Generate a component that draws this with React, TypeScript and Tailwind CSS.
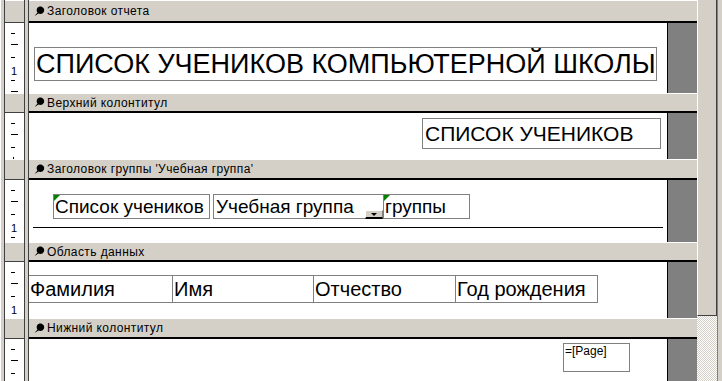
import React from "react";

const ui = { fontFamily: '"Liberation Sans", Arial, sans-serif' };

const Glyph = () => (
  <svg width="11" height="11" viewBox="0 0 11 11" className="shrink-0">
    <path d="M0.5 10 L3.5 6.5 C2 4.5 2.5 1.5 5.5 0.5 C8.5 0 11 2.5 10 5.5 C9 8 6 8.5 4.5 7.5 Z" fill="#000" />
  </svg>
);

const Ruler = ({ full }: { full: boolean }) => (
  <>
    <div className="absolute left-[6px] top-[10px] h-px w-[4px] bg-black" />
    <div className="absolute left-[6px] top-[21px] h-px w-[7px] bg-black" />
    <div className="absolute left-[6px] top-[34px] h-px w-[4px] bg-black" />
    {full ? (
      <>
        <div className="absolute left-[6px] top-[43px] text-[11px] leading-none">1</div>
        <div className="absolute left-[6px] top-[57px] h-px w-[4px] bg-black" />
        <div className="absolute left-[6px] top-[68px] h-px w-[7px] bg-black" />
      </>
    ) : (
      <div className="absolute left-[8px] top-[44px] h-[2px] w-px bg-black" />
    )}
  </>
);

const Gutter = ({ header, full }: { header?: boolean; full?: boolean }) => (
  <div className="flex w-[29px] shrink-0">
    <div className="w-[4px] border-l border-white bg-[#d4d0c8]" />
    <div className="w-px bg-[#404040]" />
    {header ? (
      <div className="w-[19px] border-t border-white border-b border-b-[#404040] bg-[#d4d0c8]" />
    ) : (
      <div className="relative w-[19px] overflow-hidden bg-white">
        <Ruler full={!!full} />
      </div>
    )}
    <div className="w-px bg-[#404040]" />
    <div className="w-[3px] bg-[#d4d0c8]" />
    <div className="w-px bg-[#404040]" />
  </div>
);

const Section = ({
  title,
  headH,
  bodyH,
  full,
  children,
}: {
  title: string;
  headH: string;
  bodyH: string;
  full?: boolean;
  children?: React.ReactNode;
}) => (
  <>
    <div className={`flex ${headH}`}>
      <Gutter header />
      <div className="flex w-[668px] items-center border-t border-white border-b-2 border-b-black bg-[#d4d0c8] pl-[5px]">
        <Glyph />
        <span className="ml-[2px] whitespace-nowrap text-[12px] leading-none tracking-[0.4px]">{title}</span>
      </div>
    </div>
    <div className={`flex ${bodyH}`}>
      <Gutter full={full} />
      <div className="relative w-[638px] overflow-hidden bg-white">{children}</div>
      <div className="w-px bg-black" />
      <div className="w-[29px] bg-[#808080]" />
    </div>
  </>
);

const Corner = () => (
  <div className="absolute left-0 top-0 h-0 w-0 border-t-[6px] border-r-[6px] border-t-[#008000] border-r-transparent" />
);

const Box = ({ className, children }: { className: string; children?: React.ReactNode }) => (
  <div className={`absolute flex items-center whitespace-nowrap border border-[#808080] leading-none ${className}`}>
    {children}
  </div>
);

export default function App() {
  const fields = [
    { label: "Фамилия", w: "w-[144px]" },
    { label: "Имя", w: "w-[141px]" },
    { label: "Отчество", w: "w-[142px]" },
    { label: "Год рождения", w: "w-[142px]" },
  ];
  return (
    <div className="flex h-[381px] w-[722px] overflow-hidden bg-[#d4d0c8] text-black" style={ui}>
      <div className="flex w-[697px] flex-col">
        <Section title="Заголовок отчета" headH="h-[23px]" bodyH="h-[70px]" full>
          <Box className="left-[5px] top-[24px] h-[34px] w-[623px] pl-[1px] text-[27px]">
            СПИСОК УЧЕНИКОВ КОМПЬЮТЕРНОЙ ШКОЛЫ
          </Box>
        </Section>
        <Section title="Верхний колонтитул" headH="h-[20px]" bodyH="h-[46px]">
          <Box className="left-[393px] top-[5px] h-[31px] w-[239px] pl-[2px] text-[21px]">СПИСОК УЧЕНИКОВ</Box>
        </Section>
        <Section title="Заголовок группы 'Учебная группа'" headH="h-[21px]" bodyH="h-[62px]" full>
          <Box className="left-[24px] top-[14px] h-[25px] w-[157px] pl-[1px] text-[19px]">
            <Corner />
            Список учеников
          </Box>
          <Box className="left-[184px] top-[14px] h-[25px] w-[171px] pl-[2px] text-[19px]">Учебная группа</Box>
          <div className="absolute left-[336px] top-[30px] flex h-[9px] w-[18px] items-center justify-center border-l border-t border-white border-r border-r-[#808080] border-b-2 border-b-black bg-[#d4d0c8]">
            <div className="h-0 w-0 border-x-[3px] border-t-[3px] border-x-transparent border-t-black" />
          </div>
          <Box className="left-[354px] top-[14px] h-[25px] w-[87px] pl-[1px] text-[19px]">
            <Corner />
            группы
          </Box>
          <div className="absolute left-[4px] top-[47px] h-px w-[630px] bg-black" />
        </Section>
        <Section title="Область данных" headH="h-[20px]" bodyH="h-[56px]" full>
          <div className="absolute left-0 top-[13px] flex h-[28px]">
            {fields.map((f) => (
              <div
                key={f.label}
                className={`flex items-center whitespace-nowrap border-y border-r border-[#808080] pl-[1px] text-[20px] leading-none ${f.w}`}
              >
                {f.label}
              </div>
            ))}
          </div>
        </Section>
        <Section title="Нижний колонтитул" headH="h-[21px]" bodyH="h-[42px]">
          <div className="absolute left-[534px] top-[4px] h-[29px] w-[67px] border border-[#808080] pl-px pt-px text-[12px] leading-none">
            =[Page]
          </div>
        </Section>
      </div>
      <div className="flex w-[25px] flex-col">
        <div className="flex h-[316px]">
          <div className="w-[20px] border-l border-white border-r border-r-[#404040] border-b border-b-[#404040] bg-[#d4d0c8]" />
          <div className="w-[5px] border-l border-[#808080] bg-[#d4d0c8]" />
        </div>
        <div className="flex flex-1">
          <div className="w-[20px] bg-[repeating-conic-gradient(#d4d0c8_0_25%,#ffffff_0_50%)] bg-[length:2px_2px]" />
          <div className="w-[5px] border-l border-[#808080] bg-[#d4d0c8]" />
        </div>
      </div>
    </div>
  );
}
